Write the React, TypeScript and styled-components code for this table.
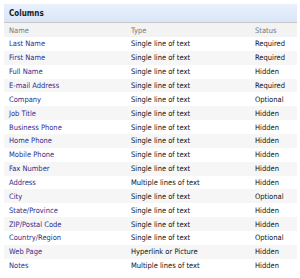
import React from "react";
import styled, { createGlobalStyle } from "styled-components";

const GlobalStyle = createGlobalStyle`
    html, body {
        margin: 0;
        padding: 0;
        background: #ffffff;
    }
    body {
        font-family: "DejaVu Sans Condensed", "DejaVu Sans", "Liberation Sans", sans-serif;
        font-size: 7.5px;
    }
`;

const Panel = styled.div`
    width: 293px;
    margin: 4px 0 0 4px;
`;

const TitleBar = styled.div`
    height: 18px;
    display: flex;
    align-items: center;
    padding-left: 5px;
    background: linear-gradient(#e9f1fc, #d9e6f8);
    border-bottom: 1px solid #c8c8c8;
    font-weight: bold;
    font-size: 8px;
    color: #1a1a1a;
`;

const Row = styled.div<{ $head?: boolean; $alt?: boolean }>`
    display: grid;
    grid-template-columns: 122px 124px 1fr;
    align-items: center;
    height: ${({ $head }) => ($head ? "14px" : "13.86px")};
    padding-left: 5px;
    background: ${({ $head, $alt }) => ($head ? "#f3f3f3" : $alt ? "#f6f6f6" : "#ffffff")};
    color: ${({ $head }) => ($head ? "#7a7a7a" : "#111111")};
    white-space: nowrap;
`;

const NameCell = styled.span`
    color: #2e2e8e;
`;

const columns: [string, string, string][] = [
    ["Last Name", "Single line of text", "Required"],
    ["First Name", "Single line of text", "Required"],
    ["Full Name", "Single line of text", "Hidden"],
    ["E-mail Address", "Single line of text", "Required"],
    ["Company", "Single line of text", "Optional"],
    ["Job Title", "Single line of text", "Hidden"],
    ["Business Phone", "Single line of text", "Hidden"],
    ["Home Phone", "Single line of text", "Hidden"],
    ["Mobile Phone", "Single line of text", "Hidden"],
    ["Fax Number", "Single line of text", "Hidden"],
    ["Address", "Multiple lines of text", "Hidden"],
    ["City", "Single line of text", "Optional"],
    ["State/Province", "Single line of text", "Hidden"],
    ["ZIP/Postal Code", "Single line of text", "Hidden"],
    ["Country/Region", "Single line of text", "Optional"],
    ["Web Page", "Hyperlink or Picture", "Hidden"],
    ["Notes", "Multiple lines of text", "Hidden"],
];

export default function App() {
    return (
        <>
            <GlobalStyle />
            <Panel>
                <TitleBar>Columns</TitleBar>
                <Row $head>
                    <span>Name</span>
                    <span>Type</span>
                    <span>Status</span>
                </Row>
                {columns.map(([name, type, status], i) => (
                    <Row key={name} $alt={i % 2 === 1}>
                        <NameCell>{name}</NameCell>
                        <span>{type}</span>
                        <span>{status}</span>
                    </Row>
                ))}
            </Panel>
        </>
    );
}
